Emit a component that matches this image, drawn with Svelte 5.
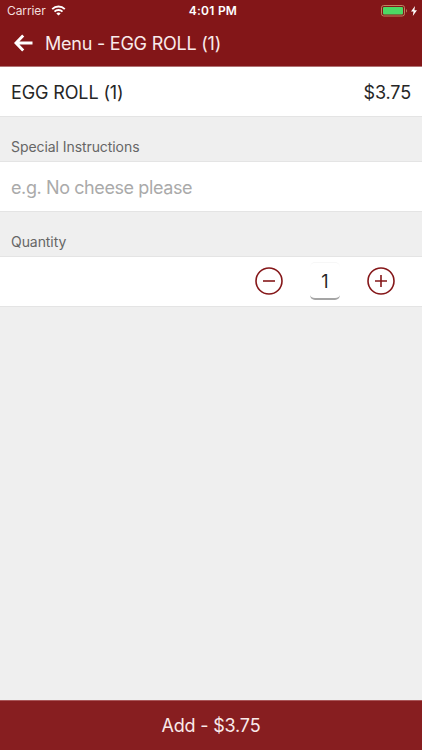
<script lang="ts">
  let quantity = $state(1);
  let instructions = $state("");

  const item = { name: "EGG ROLL (1)", price: 3.75 };
  const total = $derived((item.price * quantity).toFixed(2));

  function decrease() {
    if (quantity > 1) quantity -= 1;
  }

  function increase() {
    quantity += 1;
  }
</script>

<div class="screen">
  <header>
    <div class="status-bar">
      <div class="status-left">
        <span class="carrier">Carrier</span>
        <svg class="wifi" width="15" height="11" viewBox="0 0 14 11" fill="none" stroke="#fff" stroke-width="1.9">
          <path d="M0.7 4.1C4.2 0.7 9.8 0.7 13.3 4.1" />
          <path d="M3 6.6C5.2 4.5 8.8 4.5 11 6.6" />
          <path d="M7 10.6L4.8 8.4C6 7.3 8 7.3 9.2 8.4Z" fill="#fff" stroke="none" />
        </svg>
      </div>
      <span class="clock">4:01 PM</span>
      <div class="status-right">
        <svg width="27" height="12" viewBox="0 0 27 12">
          <rect x="0.5" y="0.5" width="23" height="10.5" rx="2.2" fill="none" stroke="#bd8560" />
          <rect x="2" y="2" width="20" height="7.5" rx="1" fill="#4cd964" />
          <path d="M25 4v3.6c1.2-.5 1.2-3.1 0-3.6z" fill="#bd8560" />
        </svg>
        <svg width="6" height="10" viewBox="0 0 6 10">
          <path d="M4 0L0 5.6h2.5L1.8 10 6 4.2H3.4z" fill="#fff" />
        </svg>
      </div>
    </div>
    <div class="nav-bar">
      <button class="back" aria-label="Back">
        <svg width="19" height="18" viewBox="0 0 19 18" fill="none" stroke="#fff" stroke-width="2.9">
          <path d="M9.2 1.4L2 9l7.2 7.6M2 9h16.5" />
        </svg>
      </button>
      <h1>Menu - {item.name}</h1>
    </div>
  </header>

  <main>
    <div class="row item-row">
      <span class="item-name">{item.name}</span>
      <span class="item-price">${item.price.toFixed(2)}</span>
    </div>
    <label class="label" for="instructions">Special Instructions</label>
    <div class="row input-row">
      <input id="instructions" placeholder="e.g. No cheese please" bind:value={instructions} />
    </div>
    <div class="label">Quantity</div>
    <div class="row quantity-row">
      <button class="round" aria-label="Decrease" onclick={decrease}>
        <svg width="28" height="28" viewBox="0 0 28 28" fill="none" stroke="#851719" stroke-width="1.6">
          <circle cx="14" cy="14" r="13" />
          <path d="M8 14h12" />
        </svg>
      </button>
      <span class="count">{quantity}</span>
      <button class="round" aria-label="Increase" onclick={increase}>
        <svg width="28" height="28" viewBox="0 0 28 28" fill="none" stroke="#851719" stroke-width="1.6">
          <circle cx="14" cy="14" r="13" />
          <path d="M8 14h12M14 8v12" />
        </svg>
      </button>
    </div>
  </main>

  <button class="add">Add - ${total}</button>
</div>

<style>
  :global(body) {
    margin: 0;
  }

  .screen {
    display: flex;
    flex-direction: column;
    height: 750px;
    background: #efefef;
    font-family: Inter, "Liberation Sans", sans-serif;
    color: #262626;
  }

  button {
    padding: 0;
    border: 0;
    background: none;
    font-family: inherit;
    cursor: pointer;
  }

  svg {
    display: block;
  }

  header {
    box-sizing: border-box;
    height: 67px;
    background: #831618;
    border-bottom: 1px solid #b07374;
    color: #fff;
  }

  .status-bar {
    display: grid;
    grid-template-columns: 1fr auto 1fr;
    align-items: center;
    height: 21px;
    padding: 0 5px 0 7px;
  }

  .status-left,
  .status-right {
    display: flex;
    align-items: center;
  }

  .status-left {
    gap: 5px;
  }

  .status-right {
    justify-content: flex-end;
    gap: 3px;
  }

  .carrier {
    font-size: 12px;
    letter-spacing: -0.1px;
    color: #f3dede;
  }

  .clock {
    padding-left: 2px;
    font-size: 12px;
    font-weight: 600;
    letter-spacing: 0.25px;
  }

  .nav-bar {
    display: flex;
    align-items: center;
    gap: 12px;
    height: 44px;
    padding-left: 14px;
  }

  h1 {
    margin: 0;
    font-size: 18px;
    font-weight: 400;
    letter-spacing: -0.23px;
    color: #f9eaea;
  }

  main {
    flex: 1;
  }

  .row {
    box-sizing: border-box;
    display: flex;
    align-items: center;
    height: 51px;
    padding: 0 11px;
    background: #fff;
    border-top: 1px solid #e4e4e4;
    border-bottom: 1px solid #e4e4e4;
    font-size: 18px;
  }

  .item-row {
    justify-content: space-between;
    height: 50px;
    padding-top: 2px;
    border-top: 0;
    letter-spacing: -0.12px;
  }

  .input-row {
    padding-top: 2px;
  }

  .label {
    box-sizing: border-box;
    display: block;
    height: 44px;
    padding: 21px 11px 0;
    font-size: 14px;
    line-height: 18px;
    letter-spacing: -0.07px;
    color: #666;
  }

  input {
    width: 100%;
    padding: 0;
    border: 0;
    outline: 0;
    font: inherit;
    letter-spacing: -0.4px;
    color: inherit;
  }

  input::placeholder {
    color: #aaa;
    opacity: 1;
  }

  .quantity-row {
    justify-content: flex-end;
    gap: 27px;
    padding-right: 27px;
    padding-bottom: 1px;
  }

  .count {
    box-sizing: border-box;
    width: 30px;
    height: 38px;
    border-top: 1px solid #f7f7f7;
    border-bottom: 2px solid #a5a5a5;
    border-radius: 5px;
    line-height: 37px;
    text-align: center;
  }

  .add {
    height: 50px;
    border-top: 1px solid #a95658;
    background: #871e20;
    color: #f9eaea;
    font-size: 18px;
    letter-spacing: -0.2px;
  }
</style>
